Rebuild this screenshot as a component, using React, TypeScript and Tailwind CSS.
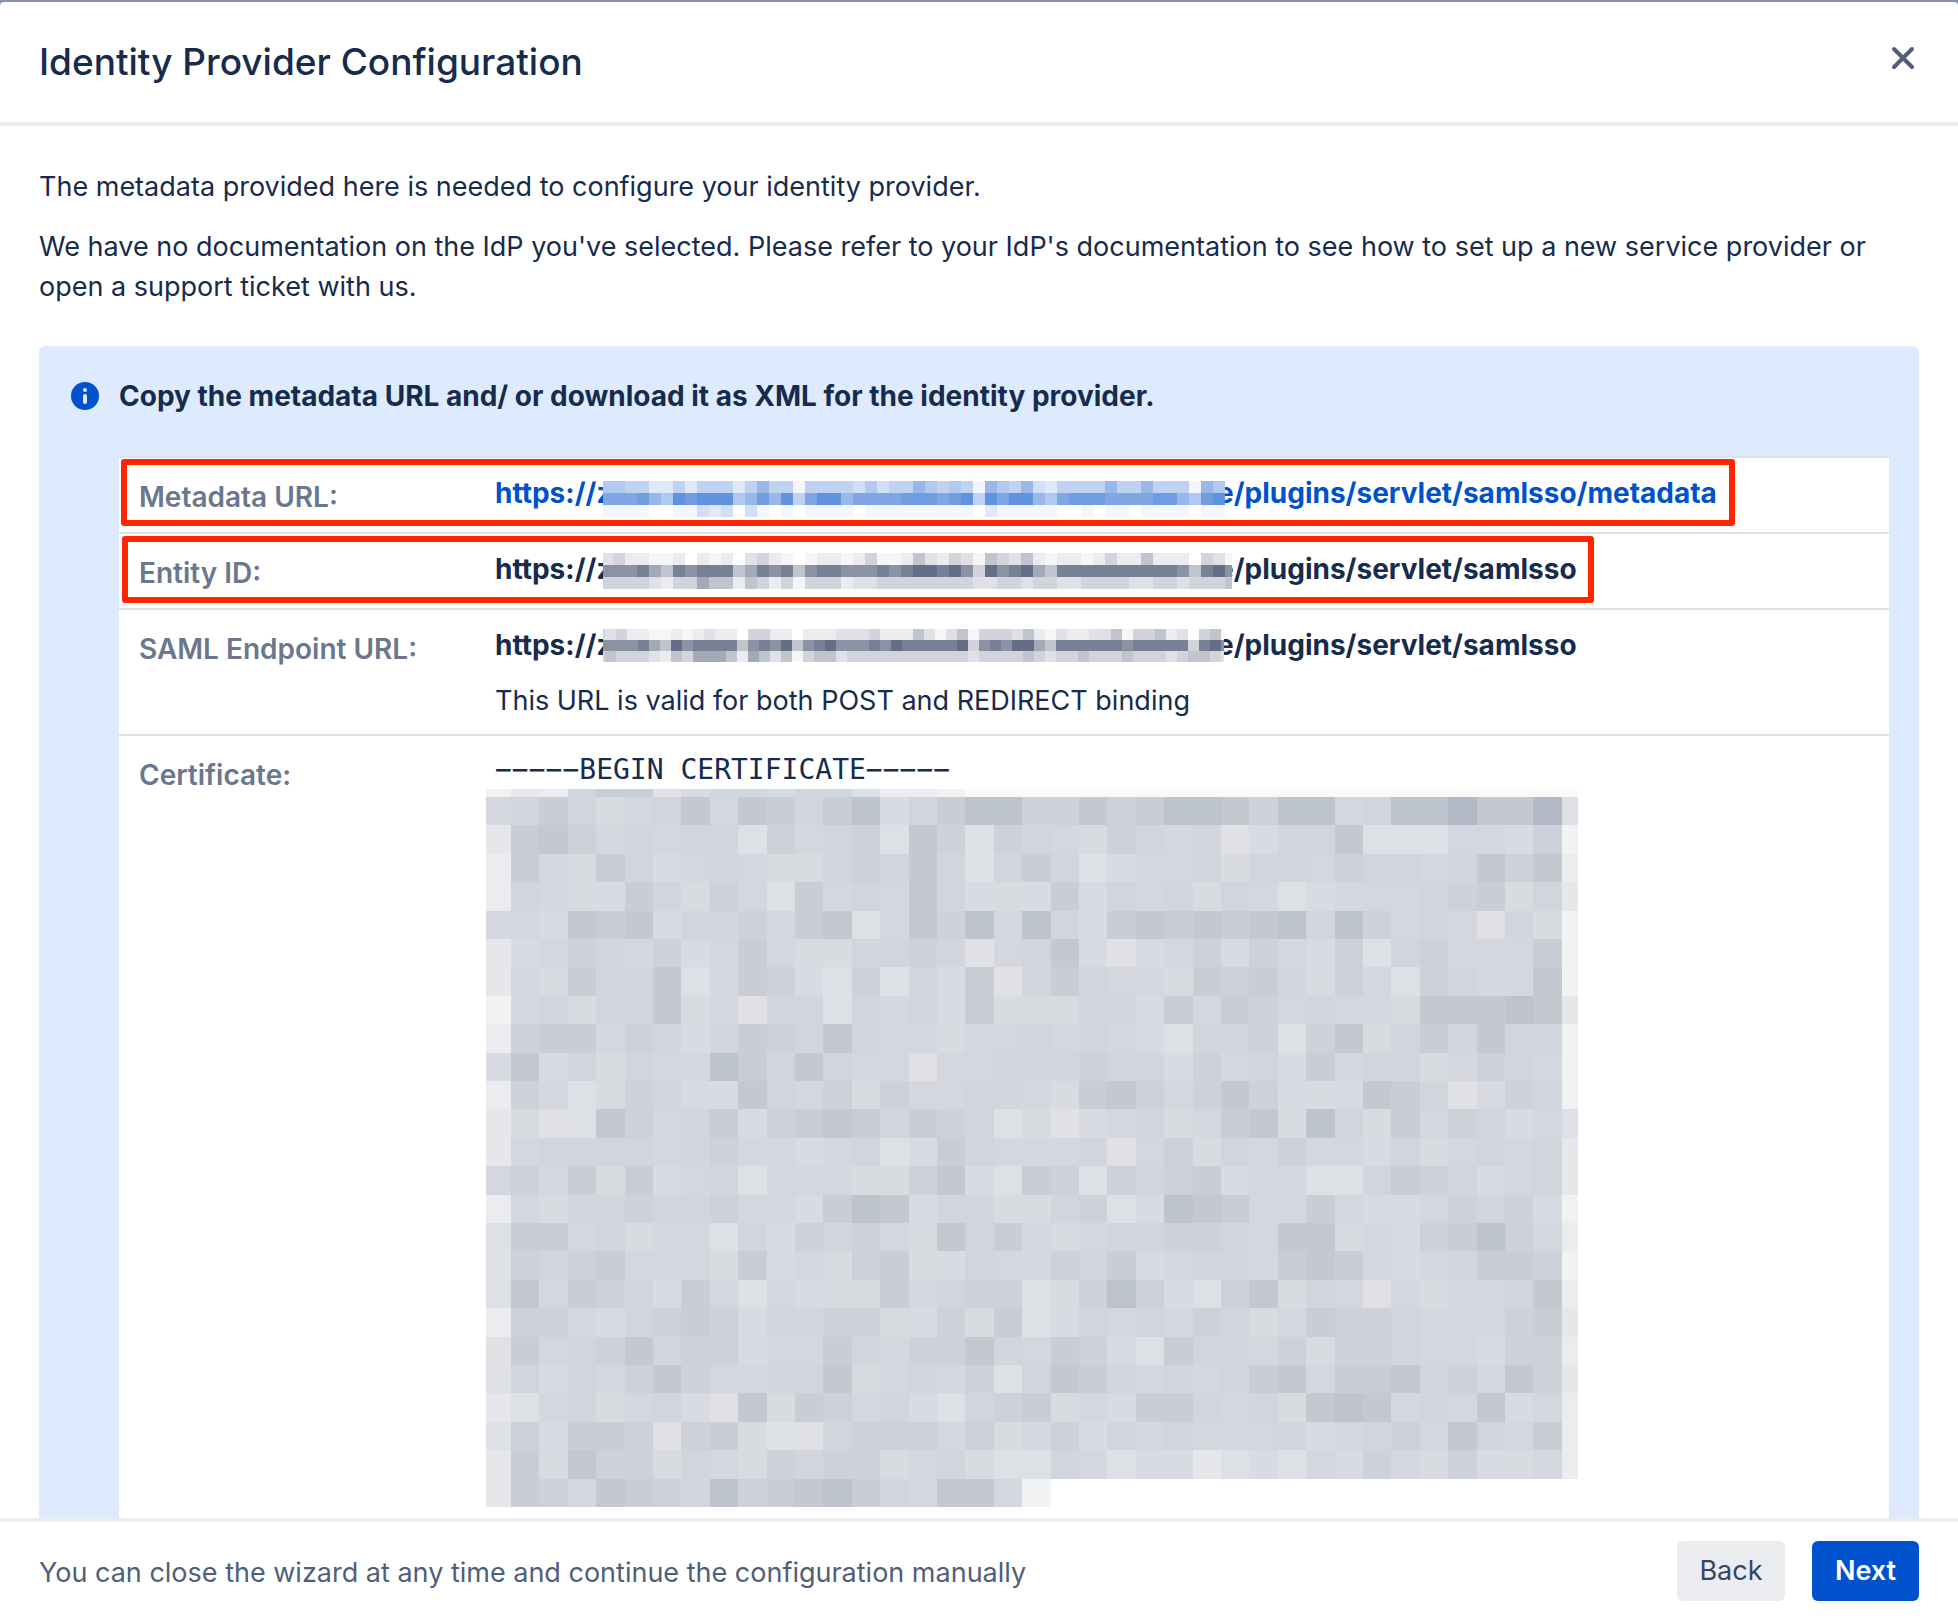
import type { ReactNode } from "react";

type Palette = Record<string, string>;

const CERT_PALETTE: Palette = {
  "0": "#b3b9c7",
  "1": "#bdc4ce",
  "2": "#c4c8d1",
  "3": "#c9cdd6",
  "4": "#cdd1d9",
  "5": "#d1d5dd",
  "6": "#d4d7df",
  "7": "#d8dbe4",
  "8": "#d8dbdf",
  "9": "#dde0e4",
  A: "#e0e0e5",
  B: "#e5e7ea",
  C: "#ebecf0",
  D: "#f1f2f4",
  E: "#fafafb"
};

const LINK_PALETTE: Palette = {
  "0": "#ffffff",
  "1": "#f3f6fe",
  "2": "#e0e9f9",
  "3": "#d0dff6",
  "4": "#bfd2f1",
  "5": "#b0c9f0",
  "6": "#98b8ea",
  "7": "#81a6e5",
  "8": "#729ce2",
  "9": "#6192df"
};

const TEXT_PALETTE: Palette = {
  "0": "#ffffff",
  "1": "#f5f6f7",
  "2": "#ebecef",
  "3": "#dfe1e6",
  "4": "#d1d4db",
  "5": "#c0c4cd",
  "6": "#a3a9b6",
  "7": "#8a92a4",
  "8": "#778196",
  "9": "#646e88"
};

const METADATA_CELLS = [
  "5544224244424644144443534465454165463244446446444165",
  "7778659899956869479967777888789497996578887777886589",
  "1111001132303101011110111111111021111100101101111011"
];

const ENTITY_CELLS = [
  "34221120212034210122124112532431543521221242252220431",
  "77786587888568785788777878998974978965888888888875897",
  "44443244655254241444233444444443344344334444334434445"
];

const ENDPOINT_CELLS = [
  "4342211212322044220222333422253135144435213223351445230451",
  "7777865978888578795789777879888889478799658888887888884897",
  "4544432546665265351455344444444444344445434454445444345543"
];

const CERT_TOP = "DBC533A8567559CCDEEEEEEEEEEEEEEEEEEEEEE";

const CERT_CELLS = [
  "653586526235317531144243112411651102209",
  "B3246565594654924945684565A75529996674D",
  "C3683576568854525953597665855645565242C",
  "C5687358469365625787375658569766654385B",
  "66723275546329624161573232321514656A58D",
  "B7645647636885545A6527A76474674954666 3D",
  "B68355296347949573A53566834358469456 62D",
  "D65855286A5595657388855736346566822212B",
  "C4336457534525668665656795549428535255D",
  "72758566135256 6A66555455746573655864 56D",
  "C4698457725648466556832464247872 35A745D",
  "B8A9246537432353459 8A765863281583645769",
  "B6555565466765973566 65A648564667586565B",
  "6463837659666884279349454376699534576 5B",
  "C6855455466731275588549712366367764547D",
  "933658669574546825368655445622867431 46C",
  "94543666837684387566453765563236765334D",
  "926345736967883654498414794285 6A686652C",
  "C4467543475544874839756564586344566643B",
  "A3654254476635644256347935564844566744C",
  "95756424665528656495235656532633254624B",
  "B9658657A28346579543867335658212656276C",
  "947334A4389A544464864756566657654625 63C",
  "B382448568454486589956977B979674684786C"
].map((row) => row.replace(/ /g, ""));

const CERT_LAST = "B346234514321356226D";

interface CellsProps {
  y?: number;
  rows: string[];
  palette: Palette;
  first: number;
  cell: number;
  rowHeight: number;
  max: number;
}

function Cells({ y = 0, rows, palette, first, cell, rowHeight, max }: CellsProps) {
  return (
    <>
      {rows.map((row, r) =>
        row.split("").map((key, c) => {
          const left = c === 0 ? 0 : first + (c - 1) * cell;
          const right = Math.min(first + c * cell, max);
          return (
            <rect
              key={`${r}-${c}`}
              x={left}
              y={y + r * rowHeight}
              width={Math.max(right - left, 0)}
              height={rowHeight}
              fill={palette[key]}
            />
          );
        })
      )}
    </>
  );
}

function CertificateMosaic() {
  const shared = { palette: CERT_PALETTE, first: 25, cell: 28.4, max: 1092 };
  return (
    <svg
      width="1092"
      height="718"
      viewBox="0 0 1092 718"
      shapeRendering="crispEdges"
      className="-ml-[9px] block"
      aria-hidden="true"
    >
      <Cells {...shared} rows={[CERT_TOP]} rowHeight={8} />
      <Cells {...shared} y={8} rows={CERT_CELLS} rowHeight={28.4} />
      <Cells {...shared} y={689.6} rows={[CERT_LAST]} rowHeight={28.4} />
    </svg>
  );
}

interface MaskedUrlProps {
  path: string;
  rows: string[];
  palette?: Palette;
  first?: number;
  cell?: number;
  width: number;
  top?: string;
}

// The host name stays hidden behind the mosaic, which covers the gap between both text parts.
function MaskedUrl({
  path,
  rows,
  palette = TEXT_PALETTE,
  first = 10,
  cell = 12,
  width,
  top = "top-1"
}: MaskedUrlProps) {
  const height = cell * 3;
  return (
    <span className="relative flex text-[28px] font-bold whitespace-nowrap">
      <span className="w-[722px]">https://z</span>
      <span>e{path}</span>
      <svg
        width={width}
        height={height}
        viewBox={`0 0 ${width} ${height}`}
        shapeRendering="crispEdges"
        className={`absolute left-[108px] bg-white ${top}`}
        aria-hidden="true"
      >
        <Cells rows={rows} palette={palette} first={first} cell={cell} rowHeight={cell} max={width} />
      </svg>
    </span>
  );
}

function Row({ label, children }: { label: string; children: ReactNode }) {
  return (
    <tr className="border-t-2 border-[#dfe1e6] align-top">
      <th
        scope="row"
        className="w-[376px] pt-[19px] pb-[15px] pl-5 text-left text-[28px] font-semibold text-[#6b778c]"
      >
        {label}
      </th>
      <td className="pt-[15px] pb-[13px]">{children}</td>
    </tr>
  );
}

export default function App() {
  return (
    <div className="h-screen bg-[#8993a8] pt-[2px] font-[Inter,sans-serif] text-[27px] leading-10 text-[#172b4d]">
      <div
        role="dialog"
        aria-labelledby="dialog-title"
        className="flex h-full flex-col overflow-hidden rounded-t-[4px] bg-white"
      >
        <header className="flex h-[124px] shrink-0 items-center justify-between border-b-4 border-[#ebecf0] px-[39px]">
          <h1 id="dialog-title" className="text-[37px] font-medium">
            Identity Provider Configuration
          </h1>
          <button type="button" aria-label="Close" className="mb-2 text-[#505f79]">
            <svg
              width="32"
              height="32"
              viewBox="0 0 32 32"
              fill="none"
              stroke="currentColor"
              strokeWidth="4"
              strokeLinecap="round"
            >
              <path d="M7 7l18 18M25 7L7 25" />
            </svg>
          </button>
        </header>

        <main className="min-h-0 flex-1 overflow-hidden px-[39px] pt-[41px]">
          <p>The metadata provided here is needed to configure your identity provider.</p>
          <p className="mt-5">
            We have no documentation on the IdP you've selected. Please refer to your IdP's documentation to see how to
            set up a new service provider or open a support ticket with us.
          </p>

          <section className="mt-[39px] rounded-[6px] bg-[#deebff] pt-[30px] pr-[30px] pb-10 pl-20">
            <div className="-ml-12 flex items-center gap-5">
              <svg width="28" height="28" viewBox="0 0 28 28" aria-hidden="true">
                <circle cx="14" cy="14" r="14" fill="#0052cc" />
                <circle cx="14" cy="8" r="2" fill="#deebff" />
                <rect x="12" y="12" width="4" height="10" rx="2" fill="#deebff" />
              </svg>
              <h2 className="text-[28px] font-bold">
                Copy the metadata URL and/ or download it as XML for the identity provider.
              </h2>
            </div>

            <div className="relative mt-10 bg-white">
              <table className="w-full border-collapse">
                <tbody>
                  <Row label="Metadata URL:">
                    <a href="#metadata" className="text-[#0052cc]">
                      <MaskedUrl
                        path="/plugins/servlet/samlsso/metadata"
                        rows={METADATA_CELLS}
                        palette={LINK_PALETTE}
                        width={622}
                        top="top-2"
                      />
                    </a>
                  </Row>
                  <Row label="Entity ID:">
                    <MaskedUrl path="/plugins/servlet/samlsso" rows={ENTITY_CELLS} width={629} />
                  </Row>
                  <Row label="SAML Endpoint URL:">
                    <MaskedUrl
                      path="/plugins/servlet/samlsso"
                      rows={ENDPOINT_CELLS}
                      first={2}
                      cell={11}
                      width={621}
                    />
                    <p className="mt-4">This URL is valid for both POST and REDIRECT binding</p>
                  </Row>
                  <Row label="Certificate:">
                    <pre className="font-['DejaVu_Sans_Mono',monospace] text-[28px] leading-[38px]">
                      −−−−−BEGIN CERTIFICATE−−−−−
                    </pre>
                    <CertificateMosaic />
                  </Row>
                </tbody>
              </table>
              <div className="pointer-events-none absolute top-[3px] left-[2px] h-[67px] w-[1614px] rounded-[3px] border-6 border-[#ff2600]" />
              <div className="pointer-events-none absolute top-20 left-[3px] h-[67px] w-[1472px] rounded-[3px] border-6 border-[#ff2600]" />
            </div>
          </section>
        </main>

        <footer className="flex h-[102px] shrink-0 items-center justify-between border-t-4 border-[#ebecf0] px-[39px]">
          <span className="pt-1 text-[#505f79]">
            You can close the wizard at any time and continue the configuration manually
          </span>
          <div className="flex gap-[27px]">
            <button type="button" className="h-[60px] w-[108px] rounded-[6px] bg-[#ebecf0] text-[#344563]">
              Back
            </button>
            <button type="button" className="h-[60px] w-[107px] rounded-[6px] bg-[#0052cc] font-semibold text-white">
              Next
            </button>
          </div>
        </footer>
      </div>
    </div>
  );
}
